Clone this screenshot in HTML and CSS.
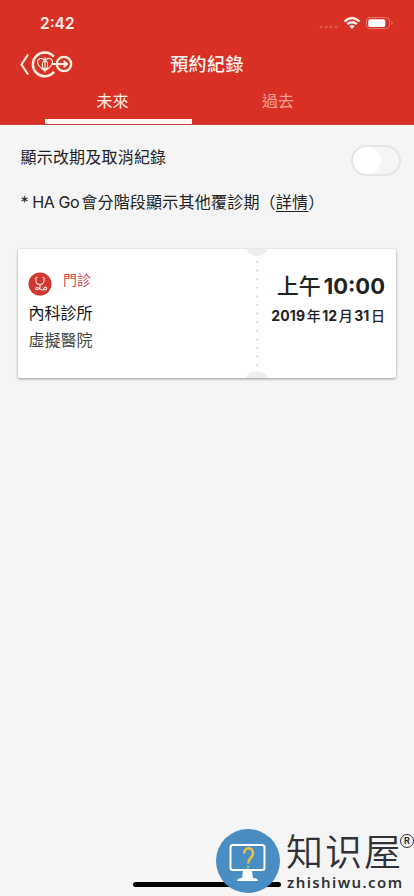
FILE: index.html
```html
<!DOCTYPE html>
<html lang="zh-Hant">
<head>
<meta charset="utf-8">
<meta name="viewport" content="width=device-width, initial-scale=1">
<title>預約紀錄</title>
<link rel="stylesheet" href="styles.css">
</head>
<body>
<div class="app">
  <header class="header">
    <div class="status">
      <span class="clock">2:42</span>
      <svg class="status-icons" width="76" height="16" viewBox="0 0 76 16">
        <g fill="#e2554c"><circle cx="3" cy="12" r="1.600"/><circle cx="8" cy="12" r="1.600"/><circle cx="13" cy="12" r="1.600"/><circle cx="18" cy="12" r="1.600"/></g>
        <g fill="none" stroke="#fff5ee" stroke-width="2.300"><path d="M26.500 6.300Q34 -.3 41.500 6.300"/><path d="M29.200 9.200Q34 5.200 38.800 9.200"/></g>
        <path d="M31.300 11.200Q34 9 36.700 11.200L34 14Z" fill="#fff5ee"/>
        <rect x="48.500" y="2.500" width="23" height="11" rx="3.500" fill="none" stroke="#e8786f"/>
        <rect x="50.300" y="4.200" width="17" height="7.700" rx="1.700" fill="#fff"/>
        <path d="M73.500 6Q75.500 8 73.500 10Z" fill="#ee928b"/>
      </svg>
    </div>
    <div class="navbar">
      <svg class="brand" width="54" height="30" viewBox="0 0 54 30" fill="none" stroke="#fff0e2">
        <path d="M9 5.500L2.500 15.500L9 25.500" stroke-width="2.100"/>
        <path d="M34.800 7.600A11.900 11.900 0 1 0 35.100 22.800" stroke-width="2.500"/>
        <circle cx="45" cy="15" r="7.200" stroke-width="2.300"/>
        <path d="M33 15H47M44.500 11.800L48 15L44.500 18.200" stroke-width="2"/>
        <path d="M26 21.800C20.500 18.500 18.300 16 18.500 12.800C19 9 23 8.200 26 11.500C29 8.200 33 9 33.500 12.800C33.700 16 31.500 18.500 26 21.800ZM26 8V23.500M23.500 13.500V18.500M28.500 13.500V18.500M23.500 13.500L26 11L28.500 13.500M23.500 18.500L26 21L28.500 18.500" stroke-width="1.100"/>
      </svg>
      <h1 class="title">預約紀錄</h1>
    </div>
    <nav class="tabs">
      <a class="tab active">未來</a>
      <a class="tab">過去</a>
    </nav>
  </header>
  <main class="content">
    <div class="option"><span>顯示改期及取消紀錄</span><span class="switch"><i class="knob"></i></span></div>
    <p class="note">* HA Go<span class="note-zh">會分階段顯示其他覆診期<span class="open">（</span><u>詳情</u>）</span></p>
    <section class="ticket">
      <div class="place">
        <div class="kind">
          <svg width="24" height="24" viewBox="0 0 24 24" fill="none" stroke="#ffe9e4" stroke-width="1.100">
            <circle cx="12" cy="12" r="11.500" fill="#d23730" stroke="none"/>
            <path d="M9.500 5.300Q7.500 5.200 7.700 7.500C7.900 10.500 9.600 12.600 12 12.600S16 10.500 16.200 7.500Q16.400 5.200 14.500 5.300M12 12.600V15.500C12 17.500 7.500 18.500 7.500 16.500C7.500 14.700 11 15.700 12.500 17.200C14 18.500 15.500 18 16 17"/>
            <circle cx="17.300" cy="16.500" r="1.400"/>
          </svg>
          <span class="kind-name">門診</span>
        </div>
        <div class="clinic">內科診所</div>
        <div class="hospital">虛擬醫院</div>
      </div>
      <div class="tear">
        <svg width="22" height="129" viewBox="0 0 22 129">
          <ellipse cx="11" cy="-2" rx="11" ry="9" fill="#eee"/>
          <ellipse cx="11" cy="131" rx="11" ry="9" fill="#eee"/>
          <path d="M11 13V118" stroke="#d4d4d4" stroke-width="2" stroke-linecap="round" stroke-dasharray="0 8.600"/>
        </svg>
      </div>
      <div class="when">
        <div class="time"><span class="ampm">上午</span>10:00</div>
        <div class="date"><b>2019</b><span>年</span><b>12</b><span>月</span><b>31</b><span>日</span></div>
      </div>
    </section>
  </main>
  <div class="home-bar"></div>
  <div class="watermark">
    <svg width="64" height="66" viewBox="0 0 64 66">
      <circle cx="32" cy="33" r="32" fill="#4a8dc2"/>
      <rect x="14.500" y="17" width="34" height="25" rx="2.500" fill="none" stroke="#fff" stroke-width="2"/>
      <path d="M27 43H36L37 50Q42 50 42 53H21Q21 50 26 50Z" fill="#fff"/>
      <path d="M28.200 25.500C28.200 18.500 37 18.500 37 25.500C37 30 32.200 30 32.200 35.500" fill="none" stroke="#efc33d" stroke-width="2.500"/>
      <circle cx="32.200" cy="39" r="1.500" fill="#70d35c"/>
    </svg>
    <div class="wm-text">
      <div class="wm-name">知识屋</div>
      <div class="wm-url">zhishiwu.com</div>
    </div>
    <span class="reg">R</span>
  </div>
</div>
</body>
</html>
```
FILE: styles.css
```css
* { box-sizing: border-box; }
body { margin: 0; background: #f5f5f5; font-family: Inter, "Noto Sans CJK TC", sans-serif; color: #222; }
.app { position: relative; width: 414px; height: 896px; overflow: hidden; }
.header { height: 125px; background: #d93025; border-bottom: 1px solid #c9473e; display: flex; flex-direction: column; }
.status { height: 46px; padding: 15px 20px 0 40px; display: flex; justify-content: space-between; }
.clock { font-size: 15.5px; line-height: 18px; font-weight: 600; color: #fff0e8; }
.navbar { height: 36px; display: grid; grid-template-columns: 102px 1fr 102px; align-items: center; }
.brand { margin-left: 19px; }
.title { margin: 0; padding-top: 2px; text-align: center; color: #fff5ee; font-size: 18px; line-height: 34px; font-weight: 500; letter-spacing: .4px; }
.tabs { flex: 1; display: flex; padding: 0 63px 0 45px; }
.tab { width: 147px; padding: 2px 12px 0 0; text-align: center; font-size: 16px; line-height: 35px; color: #f3a09a; border-bottom: 5px solid transparent; }
.tab + .tab { width: 159px; padding-right: 0; padding-left: 13px; }
.tab.active { color: #fff0e8; border-bottom-color: #fff7f4; }
.content { padding: 20px 18px 0; }
.option { display: flex; justify-content: space-between; padding: 0 0 0 2.5px; height: 31px; line-height: 24px; font-size: 16px; letter-spacing: .2px; margin-right: -5px; }
.switch { width: 50px; height: 31px; border: 2px solid #e5e5e5; border-radius: 16px; padding: 0; }
.knob { display: block; width: 28px; height: 27px; border-radius: 50%; background: #fff; }
.note { margin: 14px 0 0; padding-left: 2.5px; height: 24px; line-height: 24px; font-size: 16px; white-space: nowrap; letter-spacing: -.4px; }
.note-zh { margin-left: 2px; letter-spacing: .22px; }
.note u { text-underline-offset: 3px; }
.ticket { margin-top: 35px; height: 129px; background: #fff; border-radius: 2px; box-shadow: 0 1px 3px rgba(0,0,0,.4); display: grid; grid-template-columns: 227.5px 22px 1fr; }
.place { padding: 23px 0 0 10px; }
.kind { display: flex; height: 28px; color: #cb4a50; }
.kind-name { font-size: 14px; line-height: 16px; margin-left: 11px; }
.clinic, .hospital { font-size: 16px; line-height: 27px; padding-left: .5px; }
.clinic { color: #111; }
.hospital { color: #444; }
.tear svg { display: block; }
.when { padding: 22px 11px 0 0; text-align: right; white-space: nowrap; }
.time { font-size: 22px; line-height: 30px; font-weight: 650; }
.ampm { font-weight: 500; margin-right: 3px; }
.date { font-size: 14px; line-height: 30px; display: flex; justify-content: flex-end; gap: 1.5px; }
.date b { font-weight: 650; letter-spacing: .1px; }
.date span { font-weight: 500; }
.home-bar { position: absolute; left: 133px; top: 882px; width: 148px; height: 5px; border-radius: 3px; background: #000; }
.watermark { position: absolute; left: 216px; top: 828px; width: 198px; display: flex; color: #303237; }
.wm-text { margin-left: 6px; }
.wm-name { font-family: "Noto Sans CJK SC", sans-serif; font-size: 37px; letter-spacing: 2px; line-height: 44px; height: 46px; font-weight: 350; white-space: nowrap; }
.wm-url { font-family: "Noto Sans", sans-serif; font-size: 15px; line-height: 16px; font-weight: 600; letter-spacing: 1.4px; padding-left: 1px; }
.reg { position: absolute; left: 184px; top: 6px; width: 14px; height: 14px; border: 1.5px solid #303237; border-radius: 50%; font-size: 9px; line-height: 11px; font-weight: 700; text-align: center; }
```
